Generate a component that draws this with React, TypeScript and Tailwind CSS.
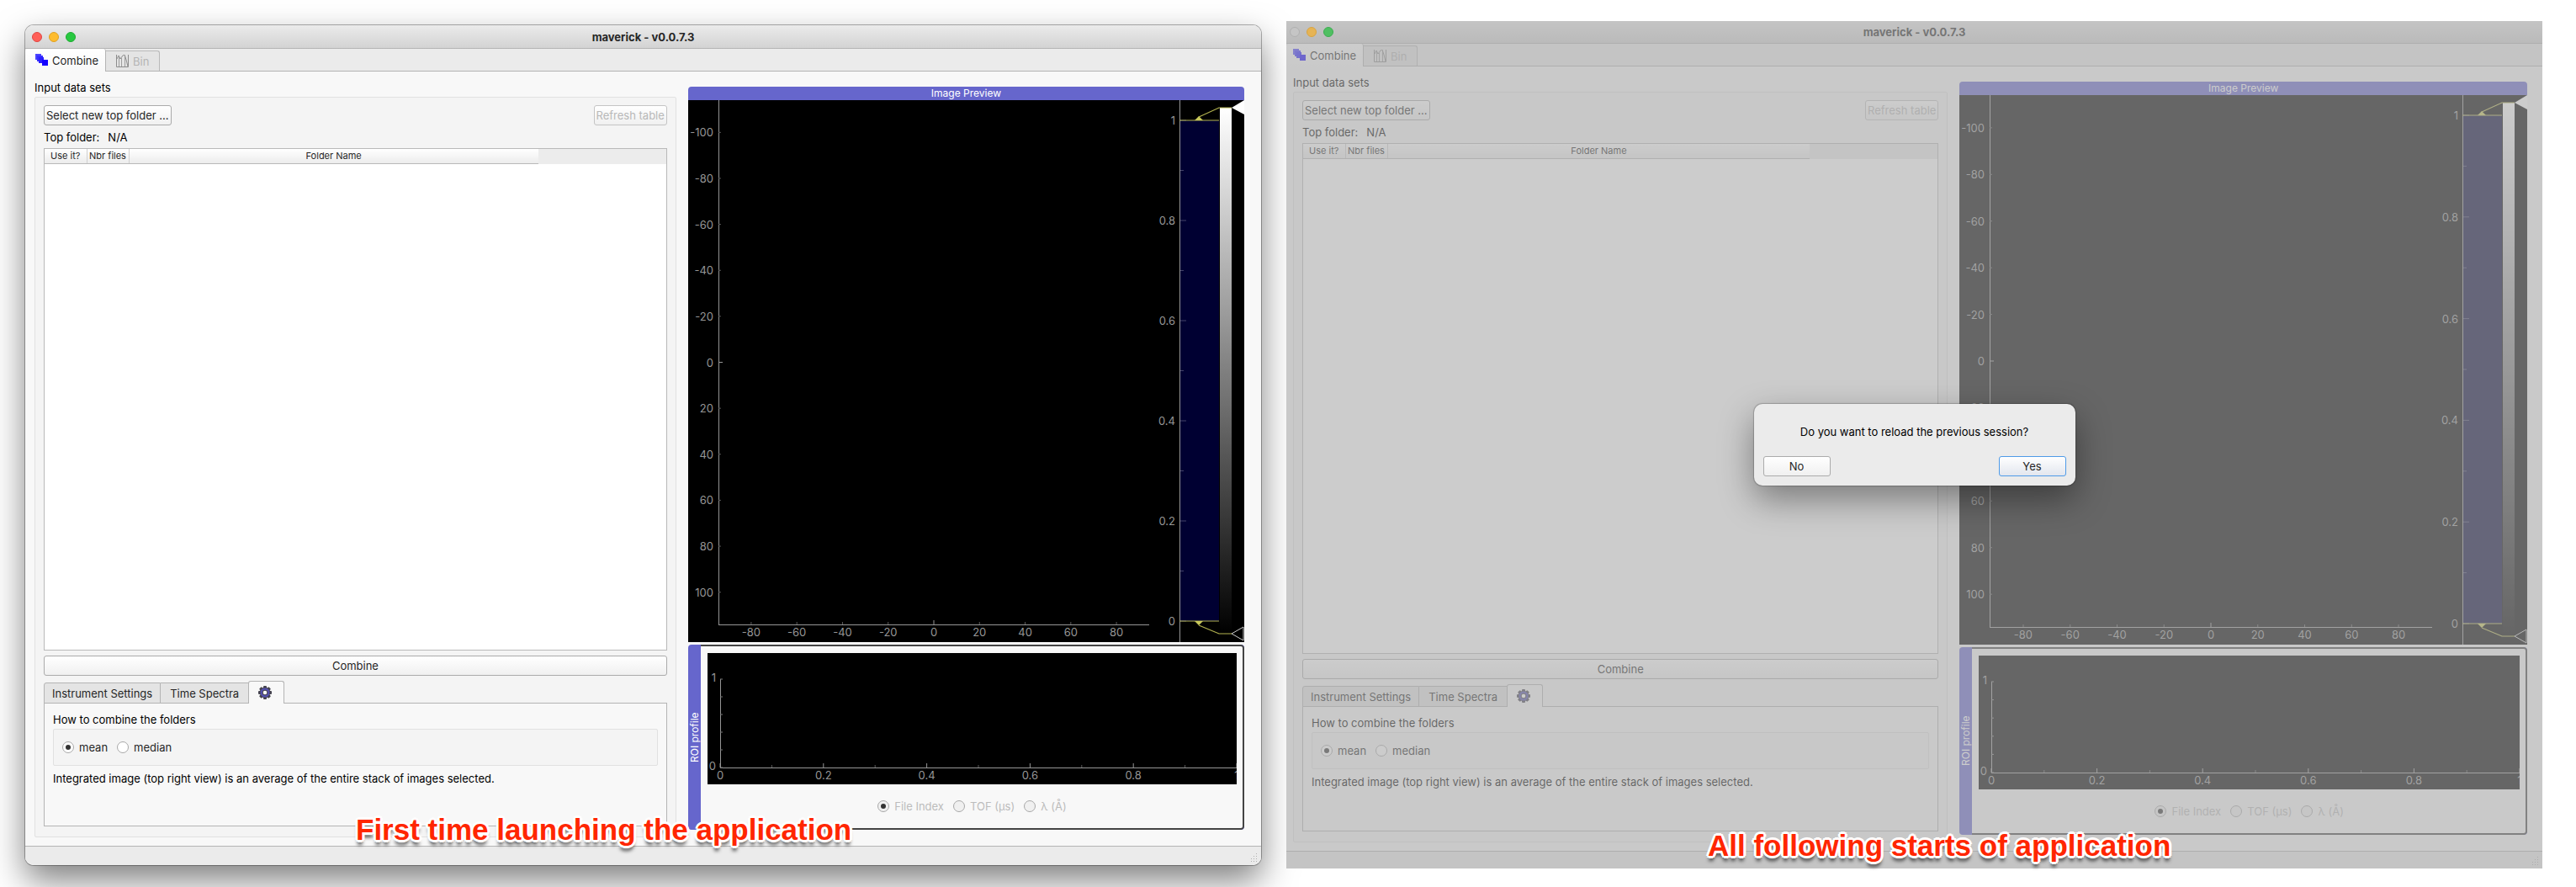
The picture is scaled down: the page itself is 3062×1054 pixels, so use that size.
import { useLayoutEffect, useRef, useState, type ReactNode } from "react";

const AXIS = "#969696";

function useSize() {
  const ref = useRef<HTMLDivElement>(null);
  const [size, setSize] = useState({ w: 0, h: 0 });
  useLayoutEffect(() => {
    const el = ref.current;
    if (!el) return;
    const measure = () => setSize({ w: el.clientWidth, h: el.clientHeight });
    measure();
    const observer = new ResizeObserver(measure);
    observer.observe(el);
    return () => observer.disconnect();
  }, []);
  return { ref, ...size };
}

function CombineIcon() {
  return (
    <svg viewBox="0 0 15 15" className="size-[15px]" aria-hidden="true">
      <rect x="0" y="0" width="7" height="7" fill="#4b45ff" />
      <rect x="2" y="2" width="7" height="7" fill="#382fff" />
      <rect x="4" y="4" width="6" height="7" fill="#2a1fff" />
      <rect x="8" y="7" width="7" height="7" fill="#1400ff" />
    </svg>
  );
}

function BinIcon() {
  return (
    <svg viewBox="0 0 15 15" className="size-[15px]" fill="none" stroke="#8c8c8c" aria-hidden="true">
      <path d="M.5 0v14.5h14V0" />
      <path d="M3.5 3v11M6.5 4v10M10.5 2v12" strokeWidth=".8" />
      <path d="M1 5l2-4 2 4 3-4 2-1 2 6 2 8" />
    </svg>
  );
}

function GearIcon() {
  const teeth = [0, 45, 90, 135, 180, 225, 270, 315];
  return (
    <svg viewBox="0 0 16 16" className="size-4" aria-hidden="true">
      {teeth.map((a) => (
        <rect key={a} x="6" y="0" width="4" height="4" rx="1" fill="#45434f" transform={`rotate(${a} 8 8)`} />
      ))}
      <circle cx="8" cy="8" r="6.2" fill="#45434f" />
      <circle cx="8" cy="8" r="4.4" fill="none" stroke="#5450b0" strokeWidth="2.2" />
      <circle cx="8" cy="8" r="2.8" fill="#fff" stroke="#2e2d3c" strokeWidth=".8" />
    </svg>
  );
}

function ImagePlot() {
  const { ref, w, h } = useSize();
  const left = 36;
  const bottom = h - 21;
  const right = w - 113;
  const xStep = (right - left) * 0.106;
  const yStep = bottom * 0.0877;
  const cx = (left + right) / 2;
  const cy = bottom / 2;
  const hx = w - 77;
  const h1 = 24;
  const h0 = h - 25;
  const bar = w - 29;
  return (
    <div ref={ref} className="relative min-h-80 flex-1 overflow-hidden bg-black">
      {w > 0 && (
        <svg width={w} height={h} className="absolute inset-0 text-[13px]" fill="#969696">
          <defs>
            <linearGradient id="grays" x1="0" y1="0" x2="0" y2="1">
              <stop offset="0" stopColor="#fff" />
              <stop offset="1" stopColor="#000" />
            </linearGradient>
          </defs>
          <path d={`M${left} 0V${bottom}H${right}`} fill="none" stroke={AXIS} shapeRendering="crispEdges" />
          {[-5, -4, -3, -2, -1, 0, 1, 2, 3, 4, 5].map((i) => (
            <g key={i}>
              <line x1={left} x2={left + (i ? 3 : 5)} y1={cy + i * yStep} y2={cy + i * yStep} stroke={i ? "#5a5a5a" : AXIS} />
              <text x={left - 6} y={cy + i * yStep + 5} textAnchor="end">{i * 20}</text>
            </g>
          ))}
          {[-4, -3, -2, -1, 0, 1, 2, 3, 4].map((i) => (
            <g key={i}>
              <line x1={cx + i * xStep} x2={cx + i * xStep} y1={bottom - (i ? 3 : 5)} y2={bottom} stroke={i ? "#5a5a5a" : AXIS} />
              <text x={cx + i * xStep} y={bottom + 14} textAnchor="middle">{i * 20}</text>
            </g>
          ))}
          <rect x={hx} y={h1} width="47" height={h0 - h1} fill="#000032" />
          {[0, 1, 2, 3, 4, 5, 6, 7, 8, 9, 10].map((i) => {
            const y = h0 - ((h0 - h1) * i) / 10;
            return (
              <g key={i}>
                <line x1={hx} x2={hx + (i % 2 ? 5 : 8)} y1={y} y2={y} stroke="#44446a" />
                {i % 2 === 0 && <text x={hx - 5} y={y + 5} textAnchor="end">{i / 10}</text>}
              </g>
            );
          })}
          <line x1={hx} x2={hx} y1="0" y2={h} stroke={AXIS} shapeRendering="crispEdges" />
          <rect x={bar} y="9" width="14" height={h - 19} fill="url(#grays)" />
          <g fill="none" stroke="#b4b450" strokeWidth="1.2">
            <path d={`M${hx} ${h1}h47M${hx + 23} ${h1 - 4}L${bar - 1} 9h15`} />
            <path d={`M${hx} ${h0}h47M${hx + 23} ${h0 + 5}L${bar - 1} ${h - 10}h15`} />
          </g>
          <path d={`M${hx + 18} ${h1}l5 -5 5 5zM${hx + 18} ${h0}l5 5 5 -5z`} fill="#c8c85a" />
          <path d={`M${w - 15} 9L${w} 0V17z`} fill="#fff" />
          <path d={`M${w - 15} ${h - 10}L${w - 1} ${h - 18}V${h - 2}z`} fill="#000" stroke="#ccc" />
        </svg>
      )}
    </div>
  );
}

function ProfilePlot() {
  const { ref, w, h } = useSize();
  const left = 15;
  const top = 31;
  const bottom = h - 20;
  return (
    <div ref={ref} className="relative flex-1 overflow-hidden bg-black">
      {w > 0 && (
        <svg width={w} height={h} className="absolute inset-0 text-[13px]" fill="#969696">
          <path d={`M${left} ${top}V${bottom}H${w}`} fill="none" stroke={AXIS} shapeRendering="crispEdges" />
          {[0, 1, 2, 3, 4, 5].map((i) => {
            const y = top + ((bottom - top) * i) / 5;
            return <line key={i} x1={left} x2={left + 3} y1={y} y2={y} stroke="#787878" />;
          })}
          <text x={left - 5} y={top + 3} textAnchor="end">1</text>
          <text x={left - 5} y={bottom + 3} textAnchor="end">0</text>
          {[0, 1, 2, 3, 4, 5, 6, 7, 8, 9, 10].map((i) => {
            const x = left + ((w - left) * i) / 10;
            return (
              <g key={i}>
                <line x1={x} x2={x} y1={bottom - (i % 2 ? 3 : 5)} y2={bottom} stroke={i % 2 ? "#5a5a5a" : AXIS} />
                {i % 2 === 0 && <text x={x} y={bottom + 14} textAnchor="middle">{i / 10}</text>}
              </g>
            );
          })}
        </svg>
      )}
    </div>
  );
}

function Radio({ name, label, checked, disabled }: { name: string; label: string; checked?: boolean; disabled?: boolean }) {
  return (
    <label className={`flex items-center gap-[6px] ${disabled ? "text-[#bcbcbc]" : "text-[#262626]"}`}>
      <input
        type="radio"
        name={name}
        defaultChecked={checked}
        disabled={disabled}
        className={`grid size-[14px] appearance-none place-items-center rounded-full border border-[#a8a8a8] before:size-[6px] before:rounded-full checked:before:bg-[#333] ${disabled ? "bg-[#f0f0f0]" : "bg-white"}`}
      />
      {label}
    </label>
  );
}

const button = "h-6 rounded-[3px] border border-[#ababab] bg-linear-to-b from-white to-[#f0f0f0]";

function MainWindow({ id, dimmed, children }: { id: string; dimmed?: boolean; children?: ReactNode }) {
  const light = "size-3 rounded-full border";
  return (
    <section
      className={`relative flex min-w-0 flex-1 flex-col bg-[#f8f8f8] ${
        dimmed ? "mt-[25px] mb-[22px]" : "mt-[30px] mb-[26px] overflow-hidden rounded-[10px]"
      }`}
    >
      <header
        className={`relative flex items-center justify-center border-b border-[#b4b4b4] bg-linear-to-b from-[#ebebeb] to-[#d3d3d3] ${
          dimmed ? "h-[27px]" : "h-7"
        }`}
      >
        <div className={`absolute z-20 flex gap-2 ${dimmed ? "left-1" : "left-2"}`}>
          <span className={`${light} ${dimmed ? "border-[#b0b0b0] bg-[#c5c5c5]" : "border-[#df4744] bg-[#ff5f57]"}`} />
          <span className={`${light} ${dimmed ? "border-[#d9a441] bg-[#e6b455]" : "border-[#dea123] bg-[#febc2e]"}`} />
          <span className={`${light} ${dimmed ? "border-[#3cae51] bg-[#50bf62]" : "border-[#1dab30] bg-[#28c840]"}`} />
        </div>
        <h1 className="text-[13px] font-bold text-[#262626]">maverick - v0.0.7.3</h1>
      </header>

      <div role="tablist" className="flex h-[27px] items-end border-b border-[#b4b4b4] bg-[#ebebeb]">
        <button
          role="tab"
          aria-selected="true"
          className={`-mb-px flex h-[27px] items-center gap-[5px] rounded-t-[3px] border-r border-[#b4b4b4] bg-linear-to-b from-white to-[#f8f8f8] pr-2 ${
            dimmed ? "pl-2" : "pl-3"
          }`}
        >
          <CombineIcon />
          Combine
        </button>
        <button
          role="tab"
          aria-selected="false"
          disabled
          className="flex h-6 items-center gap-[5px] rounded-tr-[3px] border-t border-r border-[#b9b9b9] bg-[#e4e4e4] px-3 text-[#b4b4b4]"
        >
          <BinIcon />
          Bin
        </button>
      </div>

      <div className={`flex flex-1 gap-[14px] pb-[10px] ${dimmed ? "pr-[18px] pl-2" : "pr-5 pl-[11px]"}`}>
        <div role="group" aria-labelledby={`${id}-inputs`} className="flex min-w-0 flex-[15] flex-col pt-[10px]">
          <p id={`${id}-inputs`} className="text-black">Input data sets</p>
          <div className="mt-[2px] flex flex-1 flex-col rounded-[2px] border border-[#e1e1e1] bg-[#f4f4f4] px-[10px] pt-[9px] pb-3">
            <div className="flex justify-between">
              <button className={`${button} px-[2px] text-[#262626]`}>Select new top folder ...</button>
              <button disabled className={`${button} border-[#c4c4c4] px-[2px] text-[#b8b8b8]`}>Refresh table</button>
            </div>
            <p className="mt-[5px] flex gap-[10px] text-black">
              <span>Top folder:</span>
              <span>N/A</span>
            </p>
            <div className="mt-1 min-h-40 flex-1 border border-[#b9b9b9] bg-white">
              <table className="w-full table-fixed border-collapse bg-[#ececec] text-[11px] leading-4 text-[#262626]">
                <thead>
                  <tr className="h-[17px]">
                    <th className="w-[50px] border-r border-b border-[#b9b9b9] border-r-[#d0d0d0] bg-linear-to-b from-white to-[#ececec] p-0 font-normal whitespace-nowrap">Use it?</th>
                    <th className="w-[50px] border-r border-b border-[#b9b9b9] border-r-[#d0d0d0] bg-linear-to-b from-white to-[#ececec] p-0 font-normal whitespace-nowrap">Nbr files</th>
                    <th className="border-b border-[#b9b9b9] bg-linear-to-b from-white to-[#ececec] p-0 font-normal">Folder Name</th>
                    <td className="w-[152px] p-0" />
                  </tr>
                </thead>
              </table>
            </div>
            <button className={`${button} mt-[6px] text-[#262626]`}>Combine</button>

            <div role="tablist" className="relative z-[1] mt-[6px] -mb-px flex items-end text-[#262626]">
              <button role="tab" aria-selected="false" className="h-[25px] rounded-tl-[3px] border border-[#b4b4b4] bg-[#e4e4e4] px-[9px]">Instrument Settings</button>
              <button role="tab" aria-selected="false" className="h-[25px] border-y border-[#b4b4b4] bg-[#e4e4e4] px-[11px]">Time Spectra</button>
              <button role="tab" aria-selected="true" aria-label="Options" className="flex h-[27px] w-[43px] items-center justify-center rounded-t-[3px] border border-b-0 border-[#b4b4b4] bg-[#f8f8f8] pr-1">
                <GearIcon />
              </button>
            </div>
            <div
              role="tabpanel"
              className={`border border-[#b4b4b4] bg-[#f8f8f8] px-[10px] pt-[10px] text-black ${dimmed ? "h-[149px]" : "h-[147px]"}`}
            >
              <p>How to combine the folders</p>
              <div className="mt-[2px] flex h-11 items-center gap-[11px] rounded-[2px] border border-[#e1e1e1] bg-[#f4f4f4] px-[10px]">
                <Radio name={`${id}-method`} label="mean" checked />
                <Radio name={`${id}-method`} label="median" />
              </div>
              <p className="mt-[6px]">Integrated image (top right view) is an average of the entire stack of images selected.</p>
            </div>
          </div>
        </div>

        <div className="mt-[18px] mb-[9px] flex min-w-0 flex-[13] flex-col gap-[3px]">
          <div className="flex min-h-0 flex-[3] flex-col">
            <h2 className="h-4 rounded-t-[4px] bg-[#6666cc] text-center text-[12px] leading-4 text-white">Image Preview</h2>
            <ImagePlot />
          </div>
          <div className="flex min-h-0 flex-1 overflow-hidden rounded-[4px] bg-[#6666cc]">
            <h2 className="flex w-[15px] shrink-0 rotate-180 items-center justify-center text-[12px] leading-[15px] text-white [writing-mode:vertical-rl]">ROI profile</h2>
            <div className="flex min-w-0 flex-1 flex-col rounded-r-[4px] border-y-2 border-r-2 border-[#444] bg-[#f8f8f8] pt-2 pr-[7px] pl-2">
              <ProfilePlot />
              <div className="flex h-[52px] items-center justify-center gap-[11px]">
                <Radio name={`${id}-axis`} label="File Index" checked disabled />
                <Radio name={`${id}-axis`} label="TOF (µs)" disabled />
                <Radio name={`${id}-axis`} label="λ (Å)" disabled />
              </div>
            </div>
          </div>
        </div>
      </div>

      <footer className={`flex items-end justify-end border-t border-[#b4b4b4] bg-[#ebebeb] p-1 ${dimmed ? "h-[21px]" : "h-[23px]"}`}>
        <svg viewBox="0 0 10 10" className="size-[10px]" fill="#b0b0b0" aria-hidden="true">
          <path d="M8 0h1v1h-1zM8 3h1v1h-1zM5 3h1v1h-1zM8 6h1v1h-1zM5 6h1v1h-1zM2 6h1v1h-1zM8 9h1v1h-1zM5 9h1v1h-1zM2 9h1v1h-1z" />
        </svg>
      </footer>
      {children}
    </section>
  );
}

function ReloadDialog() {
  return (
    <div className="absolute inset-0 z-10 flex items-center justify-center bg-[#aaaaaa]/60">
      <div
        role="dialog"
        aria-labelledby="reload-question"
        className="flex w-[382px] flex-col rounded-[10px] bg-[#ebebeb] px-[11px] pt-6 pb-[11px] shadow-[0_0_1px_1px_rgba(0,0,0,0.2),0_16px_40px_rgba(0,0,0,0.4)]"
      >
        <p id="reload-question" className="text-center text-black">Do you want to reload the previous session?</p>
        <div className="mt-5 flex justify-between text-[#262626]">
          <button className={`${button} w-20`}>No</button>
          <button className="h-6 w-20 rounded-[3px] border border-[#4f9be8] bg-linear-to-b from-white to-[#e2e6ee]">Yes</button>
        </div>
      </div>
    </div>
  );
}

const caption =
  "absolute z-30 font-['Liberation_Sans',Arial,sans-serif] text-[35px] leading-10 font-bold whitespace-nowrap text-[#ff2600] [text-shadow:3px_0_#fff,-3px_0_#fff,0_3px_#fff,0_-3px_#fff,2px_2px_#fff,-2px_2px_#fff,2px_-2px_#fff,-2px_-2px_#fff,0_6px_4px_rgba(0,0,0,0.7)]";

export default function App() {
  return (
    <main className="flex min-h-screen gap-[30px] overflow-hidden bg-white pr-10 pl-[30px] font-['Inter',sans-serif] text-[13px] leading-[18px] text-[#262626]">
      <div className="relative flex min-w-0 flex-[1469]">
        <div className="absolute inset-x-0 top-[30px] bottom-[26px] rounded-[10px] shadow-[0_0_0_1px_rgba(0,0,0,0.3),0_18px_40px_rgba(0,0,0,0.5)]" />
        <MainWindow id="first" />
        <p className={`${caption} bottom-[48px] left-[393px]`}>First time launching the application</p>
      </div>
      <div className="relative flex min-w-0 flex-[1493]">
        <MainWindow id="next" dimmed>
          <ReloadDialog />
        </MainWindow>
        <p className={`${caption} bottom-[29px] left-[501px]`}>All following starts of application</p>
      </div>
    </main>
  );
}
